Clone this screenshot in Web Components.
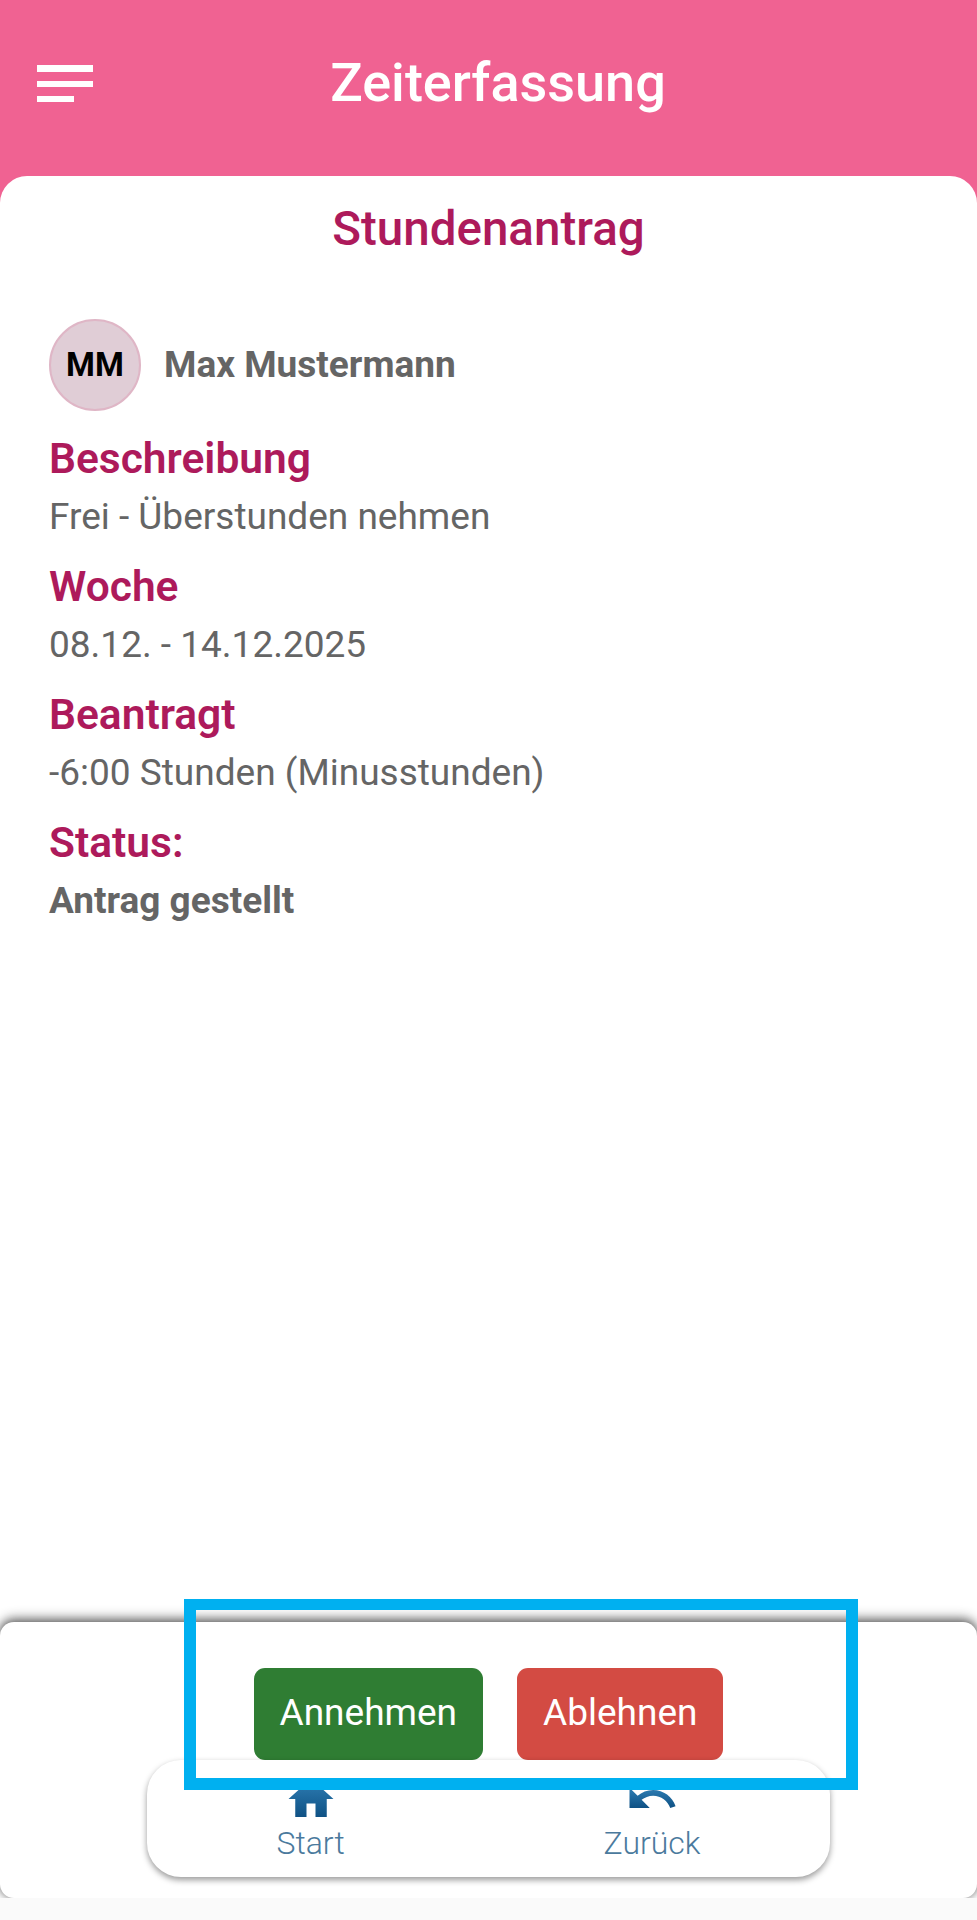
<!DOCTYPE html>
<html lang="de">
<head>
<meta charset="utf-8">
<title>Zeiterfassung</title>
<style>
    html, body {
        margin: 0;
        padding: 0;
        background: #fafafa;
    }
</style>
</head>
<body>

<zeit-app>
    <app-header slot="header">Zeiterfassung</app-header>

    <request-card slot="content" heading="Stundenantrag">
        <user-chip initials="MM">Max Mustermann</user-chip>
        <info-field label="Beschreibung">Frei - Überstunden nehmen</info-field>
        <info-field label="Woche">08.12. - 14.12.2025</info-field>
        <info-field label="Beantragt">-6:00 Stunden (Minusstunden)</info-field>
        <info-field label="Status:" strong>Antrag gestellt</info-field>
    </request-card>

    <action-panel slot="footer">
        <action-button slot="actions" color="#2f7d33">Annehmen</action-button>
        <action-button slot="actions" color="#d34b43">Ablehnen</action-button>
        <nav-item slot="nav" icon="home">Start</nav-item>
        <nav-item slot="nav" icon="undo">Zurück</nav-item>
    </action-panel>

    <highlight-frame slot="overlay"></highlight-frame>
</zeit-app>

<script>
const appTemplate = document.createElement('template');
appTemplate.innerHTML = `
<style>
    :host {
        background: linear-gradient(#f06292 0 400px, white 400px);
        display: flex;
        flex-direction: column;
        font-family: Roboto, "Liberation Sans", sans-serif;
        height: 1920px;
        overflow: hidden;
        position: relative;
        width: 977px;
    }

    .content {
        display: flex;
        flex: 1;
        flex-direction: column;
    }

    .strip {
        background-color: #fafafa;
        height: 22px;
        position: relative;
    }
</style>
<slot name="header"></slot>
<div class="content"><slot name="content"></slot></div>
<slot name="footer"></slot>
<div class="strip"></div>
<slot name="overlay"></slot>
`;

class ZeitApp extends HTMLElement {
    constructor() {
        super();
        this.attachShadow({ mode: 'open' }).appendChild(appTemplate.content.cloneNode(true));
    }
}

const headerTemplate = document.createElement('template');
headerTemplate.innerHTML = `
<style>
    :host {
        box-sizing: border-box;
        color: white;
        display: flex;
        flex: none;
        height: 176px;
        padding: 65px 0 0 37px;
    }

    .menu {
        display: block;
        flex: none;
        height: 37px;
        width: 56px;
    }

    h1 {
        flex: 1;
        font-size: 54px;
        font-weight: 500;
        line-height: 60px;
        margin: -12px 0 0;
        padding-right: 74px;
        text-align: center;
    }
</style>
<svg class="menu" viewBox="0 0 56 37" fill="white">
    <rect x="0" y="0" width="56" height="7"/>
    <rect x="0" y="16" width="56" height="6"/>
    <rect x="0" y="31" width="37" height="6"/>
</svg>
<h1><slot></slot></h1>
`;

class AppHeader extends HTMLElement {
    constructor() {
        super();
        this.attachShadow({ mode: 'open' }).appendChild(headerTemplate.content.cloneNode(true));
    }
}

const cardTemplate = document.createElement('template');
cardTemplate.innerHTML = `
<style>
    :host {
        background-color: white;
        border-radius: 27px 27px 0 0;
        box-sizing: border-box;
        display: block;
        flex: 1;
        padding: 26px 49px 0;
    }

    h2 {
        color: #ad1a5b;
        font-size: 47.5px;
        font-weight: 500;
        line-height: 54px;
        margin: 0 0 63px;
        text-align: center;
    }
</style>
<h2 id="heading"></h2>
<slot></slot>
`;

class RequestCard extends HTMLElement {
    constructor() {
        super();
        this._shadowRoot = this.attachShadow({ mode: 'open' });
        this._shadowRoot.appendChild(cardTemplate.content.cloneNode(true));
        this._shadowRoot.getElementById('heading').textContent = this.getAttribute('heading');
    }
}

const chipTemplate = document.createElement('template');
chipTemplate.innerHTML = `
<style>
    :host {
        align-items: center;
        color: #656565;
        display: flex;
        font-size: 37px;
        font-weight: 700;
        gap: 23px;
        margin-bottom: 24px;
    }

    .avatar {
        align-items: center;
        background-color: #e0cdd6;
        border: 2px solid #dfb6c6;
        border-radius: 50%;
        box-sizing: border-box;
        color: black;
        display: flex;
        flex: none;
        font-size: 33px;
        font-weight: 700;
        height: 92px;
        justify-content: center;
        padding-bottom: 2px;
        width: 92px;
    }

    span {
        padding-bottom: 2px;
    }
</style>
<div class="avatar" id="avatar"></div>
<span><slot></slot></span>
`;

class UserChip extends HTMLElement {
    constructor() {
        super();
        this._shadowRoot = this.attachShadow({ mode: 'open' });
        this._shadowRoot.appendChild(chipTemplate.content.cloneNode(true));
        this._shadowRoot.getElementById('avatar').textContent = this.getAttribute('initials');
    }
}

const fieldTemplate = document.createElement('template');
fieldTemplate.innerHTML = `
<style>
    :host {
        display: block;
        height: 128px;
    }

    .label {
        color: #ad1a5b;
        font-size: 42.5px;
        font-weight: 600;
        line-height: 48px;
    }

    .value {
        color: #656565;
        font-size: 37px;
        line-height: 48px;
        margin-top: 10px;
    }

    :host([strong]) .value {
        font-weight: 700;
    }
</style>
<div class="label" id="label"></div>
<div class="value"><slot></slot></div>
`;

class InfoField extends HTMLElement {
    constructor() {
        super();
        this._shadowRoot = this.attachShadow({ mode: 'open' });
        this._shadowRoot.appendChild(fieldTemplate.content.cloneNode(true));
        this._shadowRoot.getElementById('label').textContent = this.getAttribute('label');
    }
}

const panelTemplate = document.createElement('template');
panelTemplate.innerHTML = `
<style>
    :host {
        background-color: white;
        border-radius: 14px;
        box-shadow: 0 -4px 12px rgba(0, 0, 0, 0.45), 0 0 8px rgba(0, 0, 0, 0.4);
        box-sizing: border-box;
        display: flex;
        flex: none;
        flex-direction: column;
        height: 276px;
        padding-top: 46px;
        position: relative;
    }

    .actions {
        display: flex;
        gap: 34px;
        justify-content: center;
    }

    .nav {
        align-items: flex-start;
        background-color: white;
        border-radius: 34px;
        box-shadow: 0 3px 6px rgba(0, 0, 0, 0.4);
        box-sizing: border-box;
        display: flex;
        height: 117px;
        justify-content: space-around;
        margin: 0 147px;
        padding-top: 12px;
    }
</style>
<div class="actions"><slot name="actions"></slot></div>
<div class="nav"><slot name="nav"></slot></div>
`;

class ActionPanel extends HTMLElement {
    constructor() {
        super();
        this.attachShadow({ mode: 'open' }).appendChild(panelTemplate.content.cloneNode(true));
    }
}

const buttonTemplate = document.createElement('template');
buttonTemplate.innerHTML = `
<style>
    :host {
        display: block;
    }

    button {
        border: none;
        border-radius: 11px;
        color: white;
        display: block;
        font-family: inherit;
        font-size: 37px;
        font-weight: 400;
        height: 92px;
        padding: 0 26px 4px;
    }
</style>
<button id="button"><slot></slot></button>
`;

class ActionButton extends HTMLElement {
    constructor() {
        super();
        this._shadowRoot = this.attachShadow({ mode: 'open' });
        this._shadowRoot.appendChild(buttonTemplate.content.cloneNode(true));
        this._shadowRoot.getElementById('button').style.backgroundColor = this.getAttribute('color');
    }
}

const navIcons = {
    home: 'M10 20v-6h4v6h5v-8h3L12 3 2 12h3v8z',
    undo: 'M12.5 8c-2.65 0-5.05.99-6.9 2.6L2 7v9h9l-3.62-3.62c1.39-1.16 3.16-1.88 5.12-1.88 3.54 0 6.55 2.31 7.6 5.5l2.37-.78C21.08 11.03 17.15 8 12.5 8z',
};

const navTemplate = document.createElement('template');
navTemplate.innerHTML = `
<style>
    :host {
        align-items: center;
        color: #4b7a9d;
        display: flex;
        flex-direction: column;
        font-size: 32px;
        font-weight: 300;
        line-height: 34px;
    }

    svg {
        display: block;
        height: 54px;
        width: 54px;
    }
</style>
<svg viewBox="0 0 24 24">
    <defs>
        <linearGradient id="fade" x1="0" y1="0" x2="0" y2="1">
            <stop offset="0" stop-color="#2f7fb5"/>
            <stop offset="1" stop-color="#0f5184"/>
        </linearGradient>
    </defs>
    <path id="glyph" fill="url(#fade)"/>
</svg>
<span><slot></slot></span>
`;

class NavItem extends HTMLElement {
    constructor() {
        super();
        this._shadowRoot = this.attachShadow({ mode: 'open' });
        this._shadowRoot.appendChild(navTemplate.content.cloneNode(true));
        this._shadowRoot.getElementById('glyph').setAttribute('d', navIcons[this.getAttribute('icon')]);
    }
}

const frameTemplate = document.createElement('template');
frameTemplate.innerHTML = `
<style>
    :host {
        border: 11px solid #00b0f0;
        border-width: 11px 12px 12px;
        box-sizing: border-box;
        display: block;
        height: 191px;
        left: 184px;
        pointer-events: none;
        position: absolute;
        top: 1599px;
        width: 674px;
    }
</style>
`;

class HighlightFrame extends HTMLElement {
    constructor() {
        super();
        this.attachShadow({ mode: 'open' }).appendChild(frameTemplate.content.cloneNode(true));
    }
}

window.customElements.define('zeit-app', ZeitApp);
window.customElements.define('app-header', AppHeader);
window.customElements.define('request-card', RequestCard);
window.customElements.define('user-chip', UserChip);
window.customElements.define('info-field', InfoField);
window.customElements.define('action-panel', ActionPanel);
window.customElements.define('action-button', ActionButton);
window.customElements.define('nav-item', NavItem);
window.customElements.define('highlight-frame', HighlightFrame);
</script>
</body>
</html>
